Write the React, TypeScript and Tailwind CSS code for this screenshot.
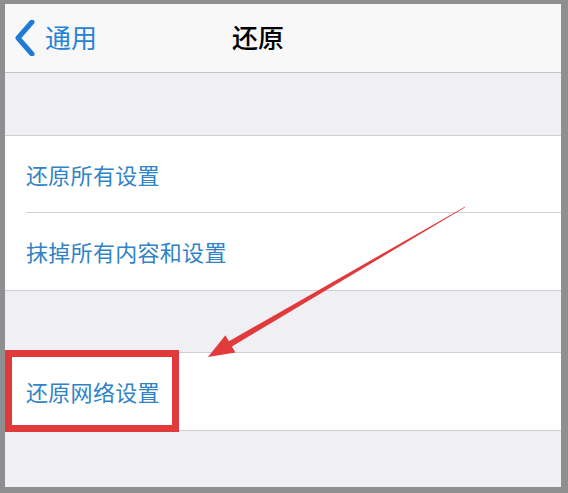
import React from 'react'

const font = { fontFamily: '"Noto Sans CJK SC", "Noto Sans", sans-serif' }

function Row({ label, border }: { label: string; border?: boolean }) {
  return (
    <div className="h-[77px] flex flex-col pl-[21px]">
      <div className={`flex-1 flex items-center ${border ? 'border-b border-[#cfcfd3]' : ''}`}>
        <span className="text-[22px] text-[#2f83c6] tracking-[0.3px]">{label}</span>
      </div>
    </div>
  )
}

export default function App() {
  return (
    <div className="relative w-[568px] h-[493px] bg-[#8f8f8f] pl-[5px] pt-[4px] pr-[7px] pb-[6px]" style={font}>
      <div className="w-full h-full flex flex-col bg-[#efeff4] overflow-hidden">
        {/* Nav bar */}
        <div className="relative h-[69px] shrink-0 bg-[#f8f8f8] border-b border-[#c4c4c8] flex items-center">
          <div className="flex items-center pl-[9px] gap-[9px]">
            <svg width="22" height="36" viewBox="0 0 22 36">
              <path d="M18 2 L4 18 L18 34" fill="none" stroke="#1f7bd6" strokeWidth="5" strokeLinecap="round" strokeLinejoin="round" />
            </svg>
            <span className="text-[26px] text-[#2583d6] leading-none pb-[2px]">通用</span>
          </div>
          <span className="absolute left-[227px] text-[26px] text-black font-medium leading-none pb-[2px]">还原</span>
        </div>

        <div className="h-[62px] shrink-0" />

        {/* Group 1 */}
        <div className="bg-white border-t border-b border-[#cfcfd3] shrink-0">
          <Row label="还原所有设置" border />
          <Row label="抹掉所有内容和设置" />
        </div>

        <div className="h-[61px] shrink-0" />

        {/* Group 2 */}
        <div className="bg-white border-t border-b border-[#cfcfd3] shrink-0">
          <Row label="还原网络设置" />
        </div>
      </div>

      {/* Annotation: red box */}
      <div className="absolute left-[5px] top-[350px] w-[174px] h-[82px] border-[7px] border-[#e13a3a]" />

      {/* Annotation: arrow */}
      <svg className="absolute inset-0 pointer-events-none" width="568" height="493" viewBox="0 0 568 493">
        <polygon
          points="208,357 235.4,352.5 231.9,346.5 465.2,207.3 464.8,206.7 228.9,341.3 225.4,335.3"
          fill="#e13a3a"
        />
      </svg>
    </div>
  )
}
